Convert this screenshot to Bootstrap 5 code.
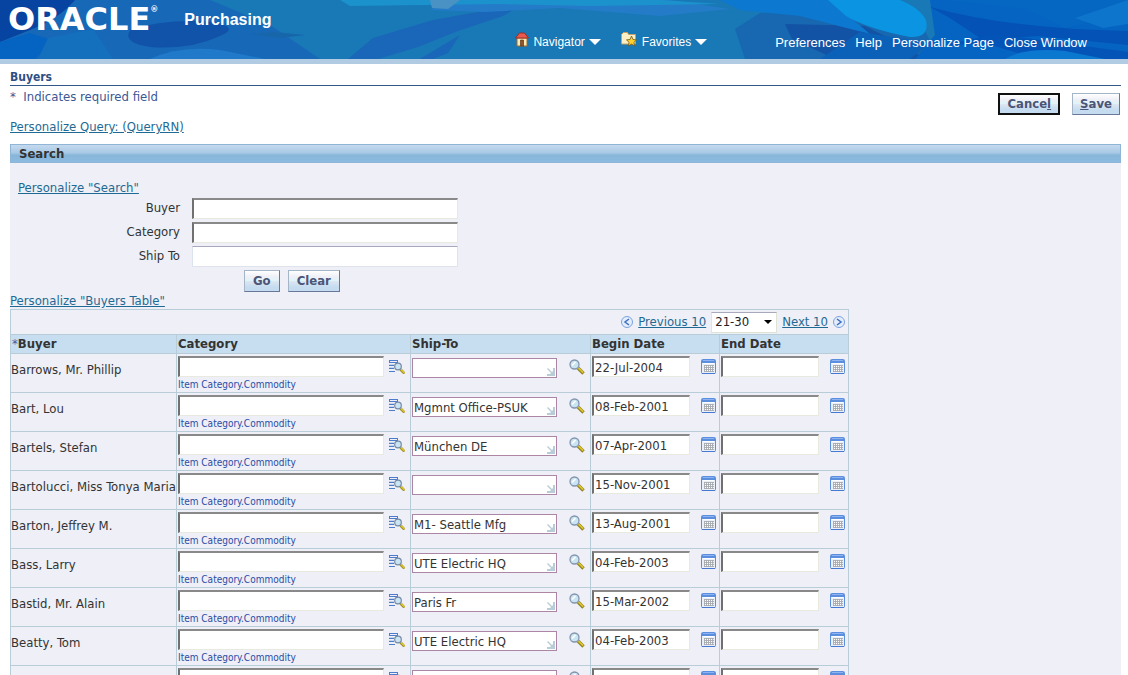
<!DOCTYPE html>
<html lang="en">
<head>
<meta charset="utf-8">
<meta name="viewport" content="width=device-width, initial-scale=1">
<title>Buyers</title>
<link href="https://cdn.jsdelivr.net/npm/bootstrap@5.3.0/dist/css/bootstrap.min.css" rel="stylesheet">
<script src="https://cdn.jsdelivr.net/npm/bootstrap@5.3.0/dist/js/bootstrap.bundle.min.js"></script>
<style>
  body { font: 13px/16px "DejaVu Sans Condensed", "DejaVu Sans", sans-serif; color: #333; }
  a { color: #1f6a94; }
  .banner { height: 64px; border-bottom: 5px solid #b0cbe2; background: #1878b6; font-family: "Liberation Sans", sans-serif; }
  .banner-art { position: absolute; inset: 0; width: 100%; height: 100%; }
  .brand { font: bold 32px/38px "DejaVu Sans", sans-serif; color: #fff; }
  .brand sup { font-size: 8px; top: -18px; }
  .product { font-size: 16px; line-height: 20px; margin-left: 26px; padding-top: 10px; }
  .banner a { color: #fff; text-decoration: none; font-size: 12px; line-height: 16px; }
  .banner .links a { font-size: 13px; }
  .links { gap: 10px; margin-left: 68px; margin-right: 41px; }
  .content { padding: 6px 7px 0 10px; }
  .page-title { font-size: 12px; line-height: 15px; color: #2d4f86; border-bottom: 1px solid #34578a; }
  .note { color: #3b5795; padding-top: 3px; }
  .query-link { margin-top: 14px; }
  .actions { gap: 12px; padding: 7px 1px 0 0; }
  .sheet { background: #eeeff7; margin-top: 9px; }
  .section-head { height: 19px; padding-left: 8px; font-size: 13px; line-height: 18px; border: 1px solid #8fb6d6; background: linear-gradient(#c5d9ee, #a9cae6 45%, #87b6da 60%, #8dbbdf); }
  .push { height: 22px; padding: 0 8px; font-weight: bold; font-size: 13px; line-height: 18px; color: #4c5578; border: 1px solid; border-color: #a3b5c6 #69789a #69789a #a3b5c6; background: linear-gradient(#fff 0, #eeeff7 30%, #dcf5f8 50%, #dde6f1 52%, #c5dcf0 80%); }
  .push.default { border: 2px solid #111; }
  .actions .push { padding: 0 7px; }
  .field { border: 2px solid; border-color: #898989 #e8eadf #e8eadf #707070; border-right-width: 1px; border-bottom-width: 1px; background: #fff; color: #333; padding: 0 1px; height: 21px; font: inherit; outline: 0; border-radius: 0; }
  .query { padding-top: 17px; }
  .query .field { width: 266px; }
  .query .flat { border-width: 1px; border-color: #a9a9bd #dfe4ec #dfe4ec #dbe3ee; }
  .query label { width: 170px; margin-right: 12px; }
  .query .line { height: 24px; }
  .go { padding: 2px 0 1px 234px; }
  .pager { border: 1px solid #b9cdd8; border-bottom: 0; height: 25px; padding-right: 3px; gap: 5px; }
  .pager select { width: 66px; height: 21px; border: 1px solid; border-color: #a9a9bd #dde3d5 #dde3d5 #dbe3ee; padding: 0 3px; background: #fff url("data:image/svg+xml,%3Csvg xmlns='http://www.w3.org/2000/svg' width='8' height='4'%3E%3Cpath d='M0 0h8L4 4z'/%3E%3C/svg%3E") no-repeat right 4px center; appearance: none; color: #222; }
  .grid-box { width: 839px; }
  .buyers { table-layout: fixed; border-collapse: collapse; width: 100%; }
  .buyers th, .buyers td { border: 1px solid #b9cdd8; padding: 0 1px; white-space: nowrap; }
  .buyers th { height: 19px; background: #c6def0; font-size: 13px; line-height: 18px; }
  .buyers td { height: 39px; vertical-align: top; }
  .buyers .who { line-height: 32px; padding: 0; }
  .cell { padding: 2px 2px 0 0; }
  .cell svg { margin-top: 3px; }
  .cell.wide { padding-right: 4px; }
  .buyers .cat { width: 206px; }
  .buyers .date { width: 98px; }
  .buyers .lov { width: 145px; height: 20px; border: 1px solid #ad86a6; margin-top: 2px; background: #fff url("data:image/svg+xml,%3Csvg xmlns='http://www.w3.org/2000/svg' width='8' height='8'%3E%3Cpath d='M1 0l4 4 1-1V0h2v8H0V6h3l1-1-4-4z' fill='%23b9cdd8'/%3E%3C/svg%3E") no-repeat right 1px bottom 1px; }
  .hint { font-size: 10px; line-height: 14px; margin-top: 1px; color: #2b4ba5; }
  .req { color: #3b5fa5; font-weight: normal; }
</style>
</head>
<body>
<svg class="d-none">
  <symbol id="calendar" viewBox="0 0 15 15"><rect x=".5" y=".5" width="14" height="14" rx="1" fill="#e9f0fa" stroke="#5c8ede"/><path d="M1 1h13v3H1z" fill="#5c8ede"/><path d="M2 1.500h11" stroke="#8db3f2"/><path d="M2 4.500h11" stroke="#fff"/><path d="M3 6h9v7H3z" fill="#fff"/><path d="M3 6.500h10M3 8.500h10M3 10.500h10M3 12.500h10M3.500 6v7M5.500 6v7M7.500 6v7M9.500 6v7M11.500 6v7" stroke="#a6a9ae" stroke-width=".9"/><path d="M1 14.500h13" stroke="#4779d3"/></symbol>
  <symbol id="lens" viewBox="0 0 16 16"><path d="M9 9l5.500 5.500" stroke="#8e8224" stroke-width="3.400"/><path d="M9.500 9l4.700 4.700" stroke="#dfc62d" stroke-width="1.700"/><circle cx="5.500" cy="5.500" r="4.500" fill="#c9e4f3" stroke="#8494ac" stroke-width="1.300"/><path d="M3 6.500L6.500 3" stroke="#fff" stroke-width="1.600"/></symbol>
  <symbol id="listlens" viewBox="0 0 16 15"><path d="M0 1.500h9M0 3.500h9M.5 1v3M8.500 1v3M0 6.500h5M0 9.500h5M0 12.500h6" stroke="#4d7dca" fill="none"/><path d="M0 5.500h5M0 8.500h5" stroke="#a9c2e8" stroke-width=".6"/><path d="M11.500 10.500l4 4" stroke="#9b8e26" stroke-width="2.600"/><path d="M11.500 10l4 4" stroke="#e2c92f" stroke-width="1.200"/><circle cx="9" cy="7.500" r="3.300" fill="#c9e4f3" stroke="#7489a4" stroke-width="1.200"/></symbol>
</svg>
<div class="vh-100 overflow-hidden d-flex flex-column">
  <header class="banner position-relative flex-shrink-0">
    <svg class="banner-art" viewBox="0 0 1128 59" preserveAspectRatio="none" aria-hidden="true">
      <rect width="1128" height="59" fill="#1978b6"/>
      <path d="M0 0h210l60 25 50 34H0z" fill="#1769b8"/>
      <path d="M0 0h75Q60 18 30 30L0 42z" fill="#0743a0"/>
      <path d="M0 42l30-9 25 8-20 18H0z" fill="#0563c2"/>
      <path d="M48 38l45-9 20 30H38z" fill="#146fbd"/>
      <path d="M130 30Q165 18 215 22q25 6 5 14-30 14-70 11-28-4-20-17z" fill="#1153a8"/>
      <path d="M150 59q30-14 70-9l45 9z" fill="#207ac9"/>
      <path d="M250 34l25-2 30 3-24 3z" fill="#1866aa"/>
      <path d="M348 59l25-21 60-18 90-16-20 12-45 15-40 16-40 12z" fill="#1a66b8"/>
      <path d="M420 59l40-24-12 18-15 6z" fill="#1a66b8"/>
      <path d="M430 10L450 0h220l60 9-70 7-100-8-75 4z" fill="#247cc8"/>
      <path d="M340 0h320l60 4-130 2-90-2-150 2z" fill="#1c92cd"/>
      <path d="M430 0h30l-12 9-16-1z" fill="#4a91c4"/>
      <path d="M745 59l-10-30 25-16 70-6 90 15 20 37z" fill="#1768b0"/>
      <path d="M785 24l80 2 40 20 20 13h-90l-43-20z" fill="#1353a6"/>
      <path d="M720 0h110l40 34-70-18-60-6z" fill="#0d78cf"/>
      <path d="M860 32l70 11-20 16h-90z" fill="#0b61b7"/>
      <path d="M930 0h198v59H915l20-24z" fill="#0563c2"/>
      <path d="M828 0h72q20 8 26 20 4 18-16 17-42-8-64-21z" fill="#0b94e1"/>
      <path d="M915 0h30l80 9 40 19 63-14V0z" fill="#0667c2"/>
      <path d="M930 7q80 22 198 24v14l-90-9-55 4-33-22z" fill="#0452b5"/>
      <path d="M945 45l50-11 133 18v7h-90l-50-15z" fill="#0454b7"/>
      <path d="M1075 18l53-18v24l-25 4z" fill="#0d75cb"/>
      <path d="M1005 59q20-12 60-8l40 8z" fill="#0b78d0"/>
    </svg>
    <div class="position-relative d-flex h-100 justify-content-between">
      <div class="d-flex align-items-start ps-2">
        <div class="brand">ORACLE<sup>®</sup></div>
        <div class="product fw-bold text-white">Purchasing</div>
      </div>
      <nav class="d-flex align-items-end pb-2">
        <a href="#" class="d-flex align-items-center me-3">
          <svg width="14" height="15" viewBox="0 0 14 15" class="me-1 mb-1"><path d="M2 6h10v8H2z" fill="#f7ebbd" stroke="#a06c2e"/><path d="M5.500 8h3v6h-3z" fill="#8e5528" stroke="#603818" stroke-width=".7"/><path d="M.5 6l4-5h5l4 5z" fill="#e85a4d" stroke="#9c2d27"/></svg>
          Navigator
          <svg width="12" height="6" class="ms-1 me-1"><path d="M0 0h12L6 6z" fill="#fff"/></svg>
        </a>
        <a href="#" class="d-flex align-items-center">
          <svg width="17" height="15" viewBox="0 0 17 15" class="me-1 mb-1"><path d="M.5 2.500l2-2h4l1 2h7V12H.500z" fill="#fbefc5" stroke="#c2a262"/><path d="M10.500 4l1.500 3.500 3.500.4-2.600 2.500.8 3.600-3.200-1.900-3.200 1.900.8-3.600L5.500 7.900 9 7.500z" fill="#ffd02c" stroke="#6b5520" stroke-width=".8"/></svg>
          Favorites
          <svg width="12" height="6" class="ms-1"><path d="M0 0h12L6 6z" fill="#fff"/></svg>
        </a>
        <div class="links d-flex">
          <a href="#">Preferences</a><a href="#">Help</a><a href="#">Personalize Page</a><a href="#">Close Window</a>
        </div>
      </nav>
    </div>
  </header>
  <main class="content flex-grow-1 d-flex flex-column">
    <h1 class="page-title fw-bold m-0">Buyers</h1>
    <div class="d-flex justify-content-between">
      <div>
        <div class="note">*&nbsp; Indicates required field</div>
        <a href="#" class="query-link d-block">Personalize Query: (QueryRN)</a>
      </div>
      <div class="d-flex align-items-start actions">
        <button type="button" class="push default">Cance<u>l</u></button>
        <button type="button" class="push"><u>S</u>ave</button>
      </div>
    </div>
    <section class="sheet flex-grow-1">
      <h2 class="section-head fw-bold m-0">Search</h2>
      <form class="query">
        <a href="#" class="ms-2 d-block">Personalize "Search"</a>
        <div class="d-flex align-items-center line"><label for="qb" class="text-end">Buyer</label><input id="qb" class="field"></div>
        <div class="d-flex align-items-center line"><label for="qc" class="text-end">Category</label><input id="qc" class="field"></div>
        <div class="d-flex align-items-center line"><label for="qs" class="text-end">Ship To</label><input id="qs" class="field flat"></div>
        <div class="d-flex gap-2 go"><button type="button" class="push">Go</button><button type="reset" class="push">Clear</button></div>
      </form>
      <a href="#" class="d-block">Personalize "Buyers Table"</a>
      <div class="grid-box">
        <div class="pager d-flex align-items-center justify-content-end">
          <svg width="12" height="12"><circle cx="6" cy="6" r="5.500" fill="#e3edfb" stroke="#7ba2dc"/><path d="M8 3L4 6l4 3" fill="none" stroke="#3e6fc1" stroke-width="1.500"/></svg>
          <a href="#">Previous 10</a>
          <select aria-label="Rows shown"><option>21-30</option></select>
          <a href="#">Next 10</a>
          <svg width="12" height="12"><circle cx="6" cy="6" r="5.500" fill="#e3edfb" stroke="#7ba2dc"/><path d="M4 3l4 3-4 3" fill="none" stroke="#3e6fc1" stroke-width="1.500"/></svg>
        </div>
        <table class="buyers">
          <colgroup><col style="width:166px"><col style="width:234px"><col style="width:180px"><col style="width:129px"><col style="width:129px"></colgroup>
          <thead><tr><th><span class="req">*</span>Buyer</th><th>Category</th><th>Ship-To</th><th>Begin Date</th><th>End Date</th></tr></thead>
          <tbody id="rows"></tbody>
        </table>
      </div>
    </section>
  </main>
</div>
<script>
  const buyers = [
    ["Barrows, Mr. Phillip", "", "22-Jul-2004"],
    ["Bart, Lou", "Mgmnt Office-PSUK", "08-Feb-2001"],
    ["Bartels, Stefan", "München DE", "07-Apr-2001"],
    ["Bartolucci, Miss Tonya Maria", "", "15-Nov-2001"],
    ["Barton, Jeffrey M.", "M1- Seattle Mfg", "13-Aug-2001"],
    ["Bass, Larry", "UTE Electric HQ", "04-Feb-2003"],
    ["Bastid, Mr. Alain", "Paris Fr", "15-Mar-2002"],
    ["Beatty, Tom", "UTE Electric HQ", "04-Feb-2003"],
    ["", "", ""]
  ];
  const icon = (id, h) => `<svg width="${id === "calendar" ? 15 : 16}" height="${h}"><use href="#${id}"/></svg>`;
  document.getElementById("rows").innerHTML = buyers.map(([name, ship, begin]) => `<tr>
    <td class="who">${name}</td>
    <td><div class="cell wide d-flex justify-content-between align-items-start"><input class="field cat" aria-label="Category">${icon("listlens", 15)}</div>${name && '<div class="hint">Item Category.Commodity</div>'}</td>
    <td><div class="cell wide d-flex justify-content-between align-items-start"><input class="field lov" aria-label="Ship-To" value="${ship}">${icon("lens", 16)}</div></td>
    <td><div class="cell d-flex justify-content-between align-items-start"><input class="field date" aria-label="Begin Date" value="${begin}">${icon("calendar", 15)}</div></td>
    <td><div class="cell d-flex justify-content-between align-items-start"><input class="field date" aria-label="End Date">${icon("calendar", 15)}</div></td>
  </tr>`).join("");
</script>
</body>
</html>
